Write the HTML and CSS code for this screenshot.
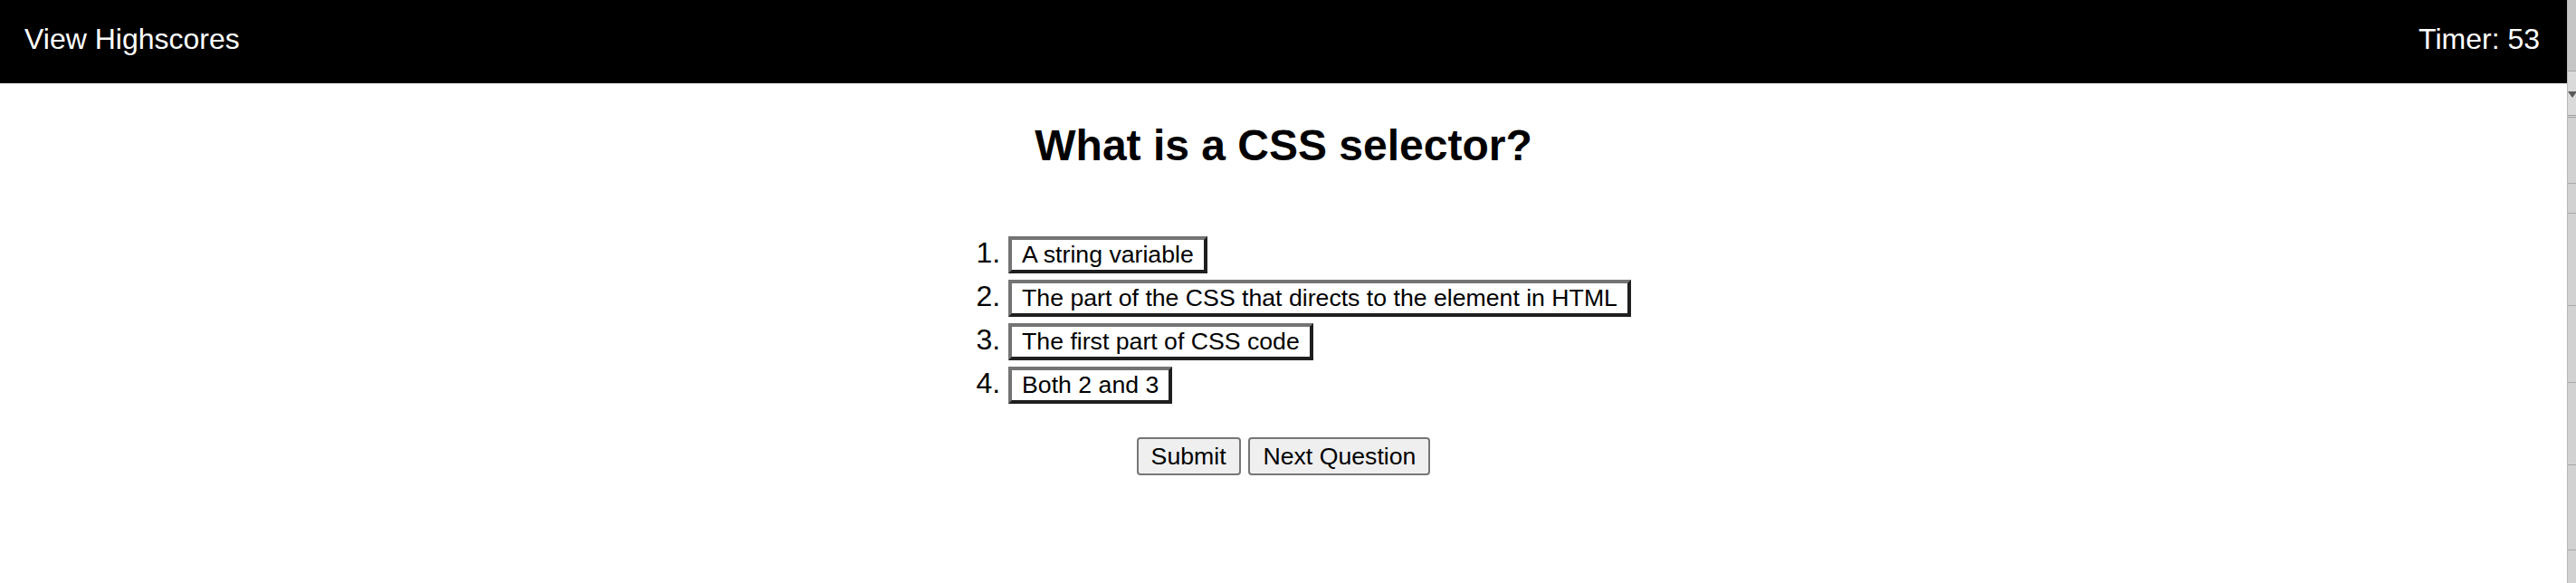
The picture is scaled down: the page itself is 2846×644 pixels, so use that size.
FILE: index.html
```html
<!DOCTYPE html>
<html lang="en">
<head>
<meta charset="utf-8">
<title>Code Quiz</title>
<link rel="stylesheet" href="styles.css">
</head>
<body>
<div class="page">
  <main class="app">
    <header class="topbar">
      <a class="highscores">View Highscores</a>
      <span class="timer">Timer: 53</span>
    </header>
    <section class="quiz">
      <h1 class="question">What is a CSS selector?</h1>
      <ol class="answers">
        <li><button class="answer">A string variable</button></li>
        <li><button class="answer">The part of the CSS that directs to the element in HTML</button></li>
        <li><button class="answer">The first part of CSS code</button></li>
        <li><button class="answer">Both 2 and 3</button></li>
      </ol>
      <div class="controls">
        <button class="control">Submit</button> <button class="control">Next Question</button>
      </div>
    </section>
  </main>
  <aside class="strip">
    <div class="seg seg-top"></div>
    <div class="seg seg-arrow"><span class="tri"></span></div>
    <div class="seg seg-a"></div>
    <div class="seg seg-b"></div>
    <div class="seg seg-c"></div>
    <div class="seg seg-d"></div>
    <div class="seg seg-e"></div>
    <div class="seg seg-f"></div>
    <div class="seg seg-rest"></div>
  </aside>
</div>
</body>
</html>
```

FILE: styles.css
```css
html, body {
  margin: 0;
  padding: 0;
  background: #ffffff;
}

body {
  font-family: "Liberation Sans", Arial, Helvetica, sans-serif;
  color: #000000;
}

.page {
  display: flex;
  min-height: 644px;
}

.app {
  flex: 1;
  min-width: 0;
}

.topbar {
  height: 92px;
  box-sizing: border-box;
  background: #000000;
  color: #ffffff;
  display: flex;
  justify-content: space-between;
  align-items: flex-start;
  padding: 25px 30px 0 27px;
  font-size: 32px;
}

.highscores {
  color: #ffffff;
  text-decoration: none;
}

.quiz {
  text-align: center;
}

.question {
  font-size: 48px;
  font-weight: bold;
  margin: 41px 0 0;
}

.answers {
  width: fit-content;
  margin: 73px auto 37px;
  padding: 0 0 0 80px;
  text-align: left;
  font-size: 32px;
}

.answers li {
  margin-bottom: 7px;
}

.answers li:last-child {
  margin-bottom: 0;
}

.answer {
  font-family: "Liberation Sans", Arial, Helvetica, sans-serif;
  font-size: 26.67px;
  line-height: 29px;
  padding: 2px 11px;
  background: #ffffff;
  color: #000000;
  border-style: solid;
  border-width: 4px;
  border-color: #747474 #1f1f1f #1f1f1f #747474;
  border-radius: 0;
}

.controls {
  font-size: 32px;
}

.control {
  font-family: "Liberation Sans", Arial, Helvetica, sans-serif;
  font-size: 26.67px;
  padding: 4px 14px 3px;
  background: #efefef;
  color: #000000;
  border: 2px solid #767676;
  border-radius: 4px;
}

.strip {
  width: 10px;
  flex: none;
  background: #d2d2d2;
  border-left: 1px solid #b9b9b9;
  box-sizing: border-box;
  display: flex;
  flex-direction: column;
}

.seg {
  border-bottom: 1px solid #a8a8a8;
  box-sizing: border-box;
}

.seg-top { height: 79px; background: #c6c6c6; }
.seg-arrow { height: 51px; background: #dadada; border-bottom: 3px double #a0a0a0; position: relative; }
.tri {
  position: absolute;
  left: 0;
  top: 22px;
  width: 0;
  height: 0;
  border-left: 5px solid transparent;
  border-right: 5px solid transparent;
  border-top: 7px solid #5a5a5a;
}
.seg-a { height: 73px; }
.seg-b { height: 33px; }
.seg-c { height: 102px; }
.seg-d { height: 85px; }
.seg-e { height: 91px; }
.seg-f { height: 94px; }
.seg-rest { flex: 1; border-bottom: none; }
```
